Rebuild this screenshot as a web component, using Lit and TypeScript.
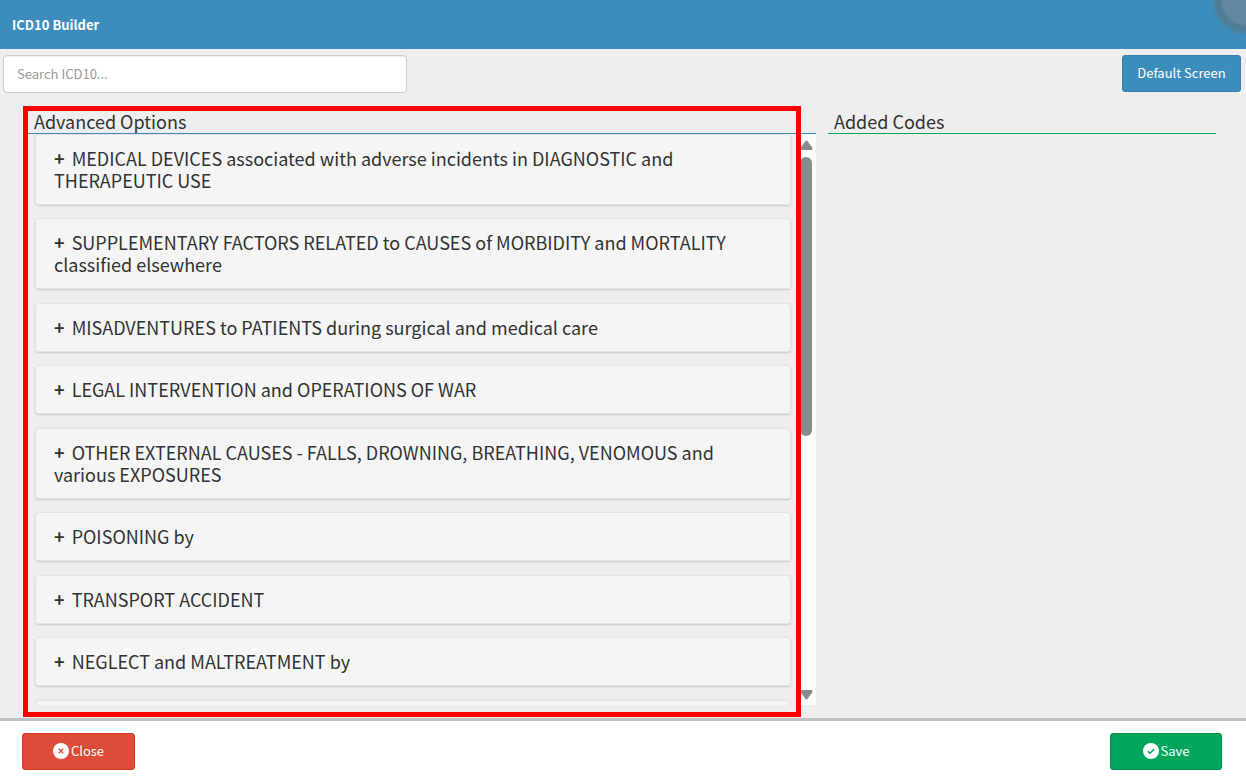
import { LitElement, html, css } from "lit";
import { customElement, state } from "lit/decorators.js";

const GROUPS = [
  "MEDICAL DEVICES associated with adverse incidents in DIAGNOSTIC and THERAPEUTIC USE",
  "SUPPLEMENTARY FACTORS RELATED to CAUSES of MORBIDITY and MORTALITY classified elsewhere",
  "MISADVENTURES to PATIENTS during surgical and medical care",
  "LEGAL INTERVENTION and OPERATIONS OF WAR",
  "OTHER EXTERNAL CAUSES - FALLS, DROWNING, BREATHING, VENOMOUS and various EXPOSURES",
  "POISONING by",
  "TRANSPORT ACCIDENT",
  "NEGLECT and MALTREATMENT by",
  "ASSAULT by",
];

@customElement("app-root")
export class AppRoot extends LitElement {
  @state() private query = "";

  static styles = css`
    :host {
      display: flex;
      flex-direction: column;
      height: 100vh;
      overflow: hidden;
      background: #eee;
      color: #333;
      font-family: "Noto Sans CJK SC", "Open Sans", sans-serif;
      font-size: 13px;
      line-height: 20px;
    }
    * {
      box-sizing: border-box;
    }
    button,
    input {
      font: inherit;
      margin: 0;
    }
    .header {
      position: relative;
      flex: none;
      display: flex;
      align-items: center;
      height: 49px;
      padding: 0 12px;
      background: #3c8dbc;
      overflow: hidden;
    }
    .title {
      margin: 0;
      color: #fff;
      font-size: 13px;
      font-weight: 700;
    }
    .orb {
      position: absolute;
      top: -34px;
      right: -35px;
      width: 70px;
      height: 70px;
    }
    .toolbar {
      flex: none;
      display: flex;
      justify-content: space-between;
      align-items: flex-start;
      padding: 6px 5px 13px 3px;
    }
    .search {
      width: 404px;
      height: 38px;
      padding: 5px 13px 7px;
      border: 1px solid #ccc;
      border-radius: 4px;
      background: #fff;
      box-shadow: inset 0 1px 1px rgba(0, 0, 0, 0.075);
      color: #555;
      outline: none;
    }
    .search::placeholder {
      color: #999;
      opacity: 1;
    }
    .btn {
      display: inline-flex;
      align-items: center;
      justify-content: center;
      gap: 2px;
      height: 37px;
      padding: 0 14px 2px;
      border: 1px solid;
      border-radius: 3px;
      color: #fff;
      cursor: pointer;
    }
    .btn svg {
      width: 16px;
      height: 16px;
    }
    .primary {
      width: 119px;
      background: #3c8dbc;
      border-color: #367fa9;
    }
    .danger {
      width: 113px;
      background: #dd4b39;
      border-color: #d73925;
    }
    .success {
      width: 112px;
      background: #00a65a;
      border-color: #008d4c;
    }
    .main {
      flex: 1;
      min-height: 0;
      display: grid;
      grid-template-columns: repeat(12, minmax(0, 1fr));
      grid-template-rows: minmax(0, 1fr);
      column-gap: 12px;
      padding: 0 30px 13px 28px;
    }
    .column {
      position: relative;
      display: flex;
      flex-direction: column;
      min-height: 0;
    }
    .options {
      grid-column: span 8;
    }
    .added {
      grid-column: span 4;
    }
    .heading {
      flex: none;
      height: 28px;
      margin: 0;
      padding: 4px 6px 0;
      border-bottom: 1px solid #3c8dbc;
      font-size: 18px;
      line-height: 22px;
      font-weight: 400;
    }
    .added .heading {
      border-color: #00a65a;
    }
    .scroller {
      flex: 1;
      min-height: 0;
      display: flex;
    }
    .list {
      flex: 1;
      margin: 0;
      padding: 0 7px;
      list-style: none;
      overflow-y: auto;
      scrollbar-width: none;
    }
    .item {
      margin-bottom: 13px;
    }
    .item:nth-child(even) {
      margin-bottom: 14px;
    }
    .card {
      display: block;
      width: 100%;
      padding: 13px 19px 14px;
      border: 0;
      border-radius: 4px;
      background: #f5f5f5;
      box-shadow: inset 0 0 0 1px #e3e3e3, 0 1px 2px rgba(0, 0, 0, 0.16);
      color: #333;
      font-size: 18px;
      line-height: 22px;
      text-align: left;
      cursor: pointer;
    }
    .plus {
      margin-right: 7px;
      font-weight: 700;
    }
    .scrollbar {
      flex: none;
      display: flex;
      flex-direction: column;
      width: 18px;
      padding: 6px 4px 5px 2px;
      background: #fcfcfc;
    }
    .rail {
      flex: 1;
      width: 12px;
      margin: 7px 0;
    }
    .thumb {
      height: 53%;
      border-radius: 6px;
      background: #8b8b8b;
    }
    .arrow {
      width: 13px;
      height: 10px;
      fill: #8b8b8b;
    }
    .highlight {
      position: absolute;
      inset: 0 15px -12px -5px;
      border: 5px solid #f00;
      pointer-events: none;
    }
    .footer {
      flex: none;
      display: flex;
      justify-content: space-between;
      padding: 12px 24px 9px 22px;
      border-top: 3px solid #c1c1c1;
      background: #fff;
    }
  `;

  render() {
    return html`
      <header class="header">
        <h1 class="title">ICD10 Builder</h1>
        <svg class="orb" viewBox="0 0 70 70" aria-hidden="true">
          <defs>
            <radialGradient id="orb">
              <stop offset="0" stop-color="#6089a1" />
              <stop offset="0.66" stop-color="#6089a1" />
              <stop offset="0.73" stop-color="#527c95" />
              <stop offset="0.83" stop-color="#527c95" />
              <stop offset="1" stop-color="#3c8dbc" />
            </radialGradient>
          </defs>
          <circle cx="35" cy="35" r="35" fill="url(#orb)" />
        </svg>
      </header>
      <div class="toolbar">
        <input
          class="search"
          type="text"
          aria-label="Search ICD10"
          placeholder="Search ICD10..."
          .value=${this.query}
          @input=${(e: Event) => (this.query = (e.target as HTMLInputElement).value)}
        />
        <button class="btn primary" type="button">Default Screen</button>
      </div>
      <main class="main">
        <section class="column options">
          <h2 class="heading">Advanced Options</h2>
          <div class="scroller">
            <ul class="list">
              ${GROUPS.map(
                (name) => html`<li class="item">
                  <button class="card" type="button" aria-expanded="false"><span class="plus">+</span>${name}</button>
                </li>`
              )}
            </ul>
            <div class="scrollbar" aria-hidden="true">
              <svg class="arrow" viewBox="0 0 12 10"><path d="M5 1Q6 0 7 1L12 8Q12 10 11 10H1Q0 10 0 8Z" /></svg>
              <div class="rail"><div class="thumb"></div></div>
              <svg class="arrow" viewBox="0 0 12 10"><path d="M5 9Q6 10 7 9L12 2Q12 0 11 0H1Q0 0 0 2Z" /></svg>
            </div>
          </div>
          <div class="highlight"></div>
        </section>
        <section class="column added">
          <h2 class="heading">Added Codes</h2>
        </section>
      </main>
      <footer class="footer">
        <button class="btn danger" type="button">
          <svg viewBox="0 0 16 16" aria-hidden="true">
            <circle cx="8" cy="8" r="8" fill="#fff" />
            <path d="M5.8 5.8l4.4 4.4M10.2 5.8l-4.4 4.4" stroke="#dd4b39" stroke-width="1.3" fill="none" />
          </svg>
          Close
        </button>
        <button class="btn success" type="button">
          <svg viewBox="0 0 16 16" aria-hidden="true">
            <circle cx="8" cy="8" r="8" fill="#fff" />
            <path d="M4.8 8.2l2.2 2.1 4.2-4.3" stroke="#00a65a" stroke-width="1.4" fill="none" />
          </svg>
          Save
        </button>
      </footer>
    `;
  }
}
